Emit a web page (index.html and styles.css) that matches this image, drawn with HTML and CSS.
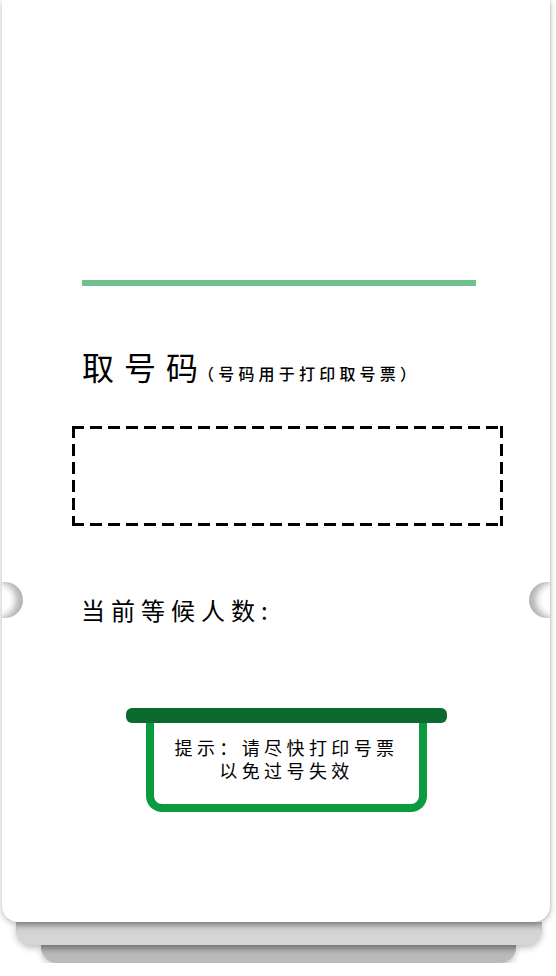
FILE: index.html
```html
<!DOCTYPE html>
<html lang="zh">
<head>
<meta charset="utf-8">
<title>取号码</title>
<link rel="stylesheet" href="styles.css">
</head>
<body>
<div class="stack">
  <div class="card">
    <div class="rule"></div>
    <h1 class="title"><span class="title-main">取号码</span><span class="title-sub">（号码用于打印取号票）</span></h1>
    <div class="dashbox"></div>
    <p class="waiting">当前等候人数:</p>
    <div class="tip">
      <div class="tip-bar"></div>
      <div class="tip-box">
        <p class="tip-line">提示：请尽快打印号票</p>
        <p class="tip-line">以免过号失效</p>
      </div>
    </div>
    <span class="notch notch-left"></span>
    <span class="notch notch-right"></span>
  </div>
  <div class="layer layer-2"></div>
  <div class="layer layer-3"></div>
</div>
</body>
</html>
```

FILE: styles.css
```css
html, body {
  margin: 0;
  padding: 0;
  background: #ffffff;
}
body {
  font-family: "Noto Sans CJK SC", "Noto Sans", sans-serif;
  color: #000;
}
.stack {
  width: 548px;
  margin-left: 2px;
}
.card {
  position: relative;
  z-index: 2;
  height: 922px;
  box-sizing: border-box;
  background: #fff;
  border-radius: 0 0 16px 16px;
  box-shadow: 0 2px 6px rgba(0, 0, 0, 0.28), 1px 0 2px rgba(0, 0, 0, 0.08);
  padding-top: 280px;
  overflow: hidden;
}
.rule {
  height: 6px;
  margin: 0 74px 0 80px;
  background: #6fc28f;
}
.title {
  margin: 58px 0 0 80px;
  font-weight: normal;
  line-height: 44px;
  white-space: nowrap;
}
.title-main {
  font-size: 32px;
  letter-spacing: 10px;
}
.title-sub {
  margin-left: -10px;
  font-size: 16px;
  font-weight: 500;
  letter-spacing: 4.2px;
}
.dashbox {
  margin: 31px 0 0 70px;
  width: 431px;
  height: 100px;
  box-sizing: border-box;
  background:
    repeating-linear-gradient(to right, #000 0 12px, transparent 12px 18px) top left / 100% 3px no-repeat,
    repeating-linear-gradient(to right, #000 0 12px, transparent 12px 18px) bottom left / 100% 3px no-repeat,
    repeating-linear-gradient(to bottom, #000 0 12px, transparent 12px 18px) top left / 3px 100% no-repeat,
    repeating-linear-gradient(to bottom, #000 0 12px, transparent 12px 18px) top right / 3px 100% no-repeat;
}
.waiting {
  margin: 68px 0 0 79px;
  font-size: 24px;
  line-height: 32px;
  letter-spacing: 6px;
}
.tip {
  margin: 82px 0 0 124px;
  width: 321px;
}
.tip-bar {
  height: 15px;
  border-radius: 6px;
  background: #0b6b2f;
}
.tip-box {
  margin: 0 20px 0 20px;
  height: 89px;
  box-sizing: border-box;
  border: 8px solid #0a9a40;
  border-top: 0;
  border-radius: 0 0 16px 16px;
  padding-top: 13px;
  text-align: center;
}
.tip-line {
  margin: 0;
  font-size: 18px;
  line-height: 23px;
  letter-spacing: 4.4px;
}
.notch {
  position: absolute;
  top: 582px;
  width: 36px;
  height: 36px;
  border-radius: 50%;
  background: #fff;
}
.notch-left {
  left: -15px;
  box-shadow: inset -7px 0 7px rgba(0, 0, 0, 0.3);
}
.notch-right {
  right: -15px;
  box-shadow: inset 7px 0 7px rgba(0, 0, 0, 0.3);
}
.layer {
  position: relative;
  border-radius: 0 0 16px 16px;
}
.layer-2 {
  z-index: 1;
  margin: 0 8px 0 14px;
  height: 23px;
  background: #d5d5d5;
  box-shadow: inset 0 8px 6px -4px rgba(0, 0, 0, 0.22), 0 3px 6px rgba(0, 0, 0, 0.25);
}
.layer-3 {
  z-index: 0;
  margin: 0 34px 0 39px;
  height: 18px;
  background: #bbbbbb;
  box-shadow: inset 0 8px 6px -4px rgba(0, 0, 0, 0.2), 0 3px 6px rgba(0, 0, 0, 0.22);
}
```
